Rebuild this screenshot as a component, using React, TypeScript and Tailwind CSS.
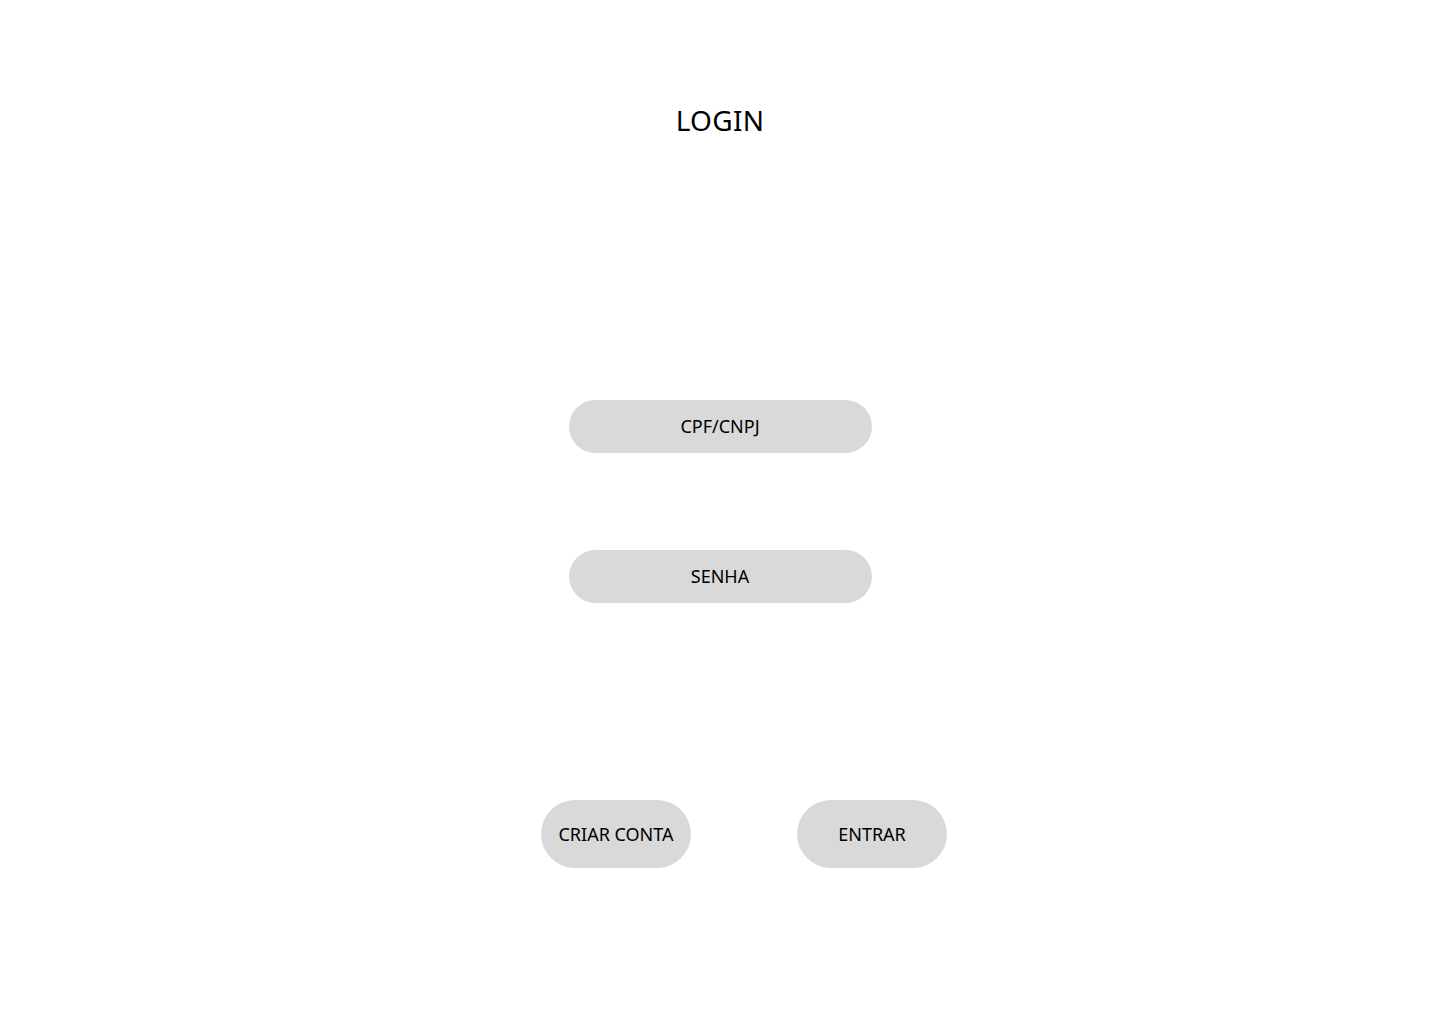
import React from 'react';

const font = { fontFamily: '"Noto Sans", "Open Sans", sans-serif' };

const Field = ({ label }: { label: string }) => (
  <div className="w-[303px] h-[53px] rounded-full bg-[#d9d9d9] flex items-center justify-center text-[18px] text-black">
    {label}
  </div>
);

const Action = ({ label }: { label: string }) => (
  <button className="w-[150px] h-[68px] rounded-[34px] bg-[#d9d9d9] flex items-center justify-center text-[18px] text-black">
    {label}
  </button>
);

export default function App() {
  return (
    <main className="min-h-screen w-full bg-white flex flex-col items-center pt-[100px]" style={font}>
      <h1 className="text-[28px] leading-[40px] text-black tracking-[0.01em]">LOGIN</h1>

      <div className="mt-[260px]">
        <Field label="CPF/CNPJ" />
      </div>
      <div className="mt-[97px]">
        <Field label="SENHA" />
      </div>

      <div className="mt-[197px] ml-[48px] flex gap-[106px]">
        <Action label="CRIAR CONTA" />
        <Action label="ENTRAR" />
      </div>
    </main>
  );
}
